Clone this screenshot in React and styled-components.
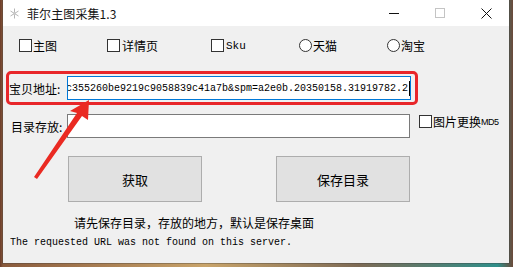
import React from 'react';
import styled, { createGlobalStyle } from 'styled-components';

const Global = createGlobalStyle`
    html, body {
        margin:0;
        padding:0;
    }
    body {
        width:513px;
        height:267px;
        overflow:hidden;
        background: linear-gradient(90deg, #6b3d2a 0px, #8a5a3c 3px, #c9a46a 40%, #7d6a55 70%, #2f8f8a 97%, #6b4a3a 100%);
        font-family: "Noto Sans CJK SC", "Noto Sans", sans-serif;
    }
`

const Page = styled.div`
    position:relative;
    width:513px;
    height:267px;
    padding-left:3px;
    box-sizing:border-box;
`

const Window = styled.div`
    width:506px;
    height:263px;
    background:#f0f0f0;
    display:flex;
    flex-direction:column;
    box-shadow: 0 0 0 1px rgba(60,60,60,0.35);
`

const TitleBar = styled.div`
    height:26px;
    background:#fff;
    display:flex;
    align-items:center;
    flex-shrink:0;
`

const AppIcon = styled.svg`
    width:9px;
    height:11px;
    margin-left:7px;
    margin-right:8px;
`

const Title = styled.div`
    font-size:12px;
    color:#111;
    flex:1;
    letter-spacing:0.1px;
`

const Ctrl = styled.div`
    width:46px;
    height:26px;
    display:flex;
    align-items:center;
    justify-content:center;
`

const Client = styled.div`
    flex:1;
    display:flex;
    flex-direction:column;
    font-size:12px;
    color:#000;
`

const OptionsRow = styled.div`
    display:grid;
    grid-template-columns: 88px 104px 88px 88px auto;
    padding:13px 0 0 16px;
    height:13px;
`

const Option = styled.label`
    display:flex;
    align-items:center;
    height:13px;
    font-size:${p => p.$latin ? '11px' : '12px'};
    font-family:${p => p.$latin ? '"Liberation Mono", monospace' : '"Noto Sans CJK SC", sans-serif'};
    white-space:nowrap;
`

const Box = styled.span`
    width:11px;
    height:11px;
    border:1px solid #333;
    background:#fff;
    margin-right:${p => p.$gap || 1}px;
    flex-shrink:0;
    border-radius:${p => p.$round ? '50%' : '0'};
`

const UrlFrame = styled.div`
    margin:19px 0 0 3px;
    width:412px;
    height:34px;
    box-sizing:border-box;
    border:3px solid #e8262a;
    border-radius:5px;
    display:flex;
    align-items:center;
`

const Label = styled.div`
    width:${p => p.$w}px;
    flex-shrink:0;
    white-space:nowrap;
    font-size:12px;
`

const TextField = styled.div`
    width:${p => p.$w}px;
    height:${p => p.$h}px;
    box-sizing:border-box;
    background:#fff;
    border:1px solid ${p => p.$focus ? '#0078d7' : '#7a7a7a'};
    display:flex;
    align-items:center;
    justify-content:flex-end;
    overflow:hidden;
    flex-shrink:0;
`

const FieldText = styled.span`
    font-family:"Liberation Mono", "DejaVu Sans Mono", monospace;
    font-size:10px;
    white-space:nowrap;
    color:#000;
    display:inline-block;
    transform:scaleY(1.15);
    padding-right:1px;
    border-right:1px solid #000;
    line-height:13px;
`

const DirRow = styled.div`
    margin:9px 0 0 8px;
    display:flex;
    align-items:center;
`

const Md5 = styled(Option)`
    margin-left:9px;
    align-self:flex-start;
    margin-top:1px;
    height:13px;
    small {
        font-family:"Liberation Sans Narrow", "Liberation Sans", sans-serif;
        font-size:9px;
        letter-spacing:-0.5px;
    }
`

const ButtonRow = styled.div`
    margin:18px 0 0 65px;
    display:flex;
    gap:74px;
`

const Button = styled.div`
    width:134px;
    height:46px;
    box-sizing:border-box;
    background:#e1e1e1;
    border:1px solid #adadad;
    display:flex;
    align-items:center;
    justify-content:center;
    font-size:13px;
`

const Hint = styled.div`
    margin:13px 0 0 71px;
    font-size:12px;
    line-height:16px;
`

const Status = styled.div`
    margin:6px 0 0 7px;
    font-family:"Liberation Mono", monospace;
    font-size:10px;
    line-height:12px;
    transform:scaleY(1.15);
    transform-origin:left center;
    white-space:nowrap;
`

const Arrow = styled.svg`
    position:absolute;
    left:0;
    top:0;
    width:513px;
    height:267px;
    pointer-events:none;
`

const App = () => (
    <>
        <Global />
        <Page>
            <Window>
                <TitleBar>
                    <AppIcon viewBox="0 0 9 11">
                        <g stroke="#b5b5b5" strokeWidth="1" fill="none">
                            <path d="M4.5 0.5v10M0.5 3l8 5M0.5 8l8-5" />
                        </g>
                        <circle cx="4.5" cy="5.5" r="1.5" fill="#c8c8c8" />
                    </AppIcon>
                    <Title>菲尔主图采集1.3</Title>
                    <Ctrl>
                        <svg width="10" height="10" viewBox="0 0 10 10">
                            <path d="M0 5.5h10" stroke="#111" strokeWidth="1" />
                        </svg>
                    </Ctrl>
                    <Ctrl>
                        <svg width="10" height="10" viewBox="0 0 10 10">
                            <rect x="0.5" y="0.5" width="9" height="9" fill="none" stroke="#c4c4c4" strokeWidth="1" />
                        </svg>
                    </Ctrl>
                    <Ctrl>
                        <svg width="11" height="11" viewBox="0 0 11 11">
                            <path d="M0.5 0.5l10 10M10.5 0.5l-10 10" stroke="#111" strokeWidth="1" />
                        </svg>
                    </Ctrl>
                </TitleBar>
                <Client>
                    <OptionsRow>
                        <Option><Box />主图</Option>
                        <Option><Box $gap={2} />详情页</Option>
                        <Option $latin><Box $gap={2} />Sku</Option>
                        <Option><Box $round />天猫</Option>
                        <Option><Box $round />淘宝</Option>
                    </OptionsRow>
                    <UrlFrame>
                        <Label $w={58}>宝贝地址:</Label>
                        <TextField $w={344} $h={24} $focus>
                            <FieldText>c355260be9219c9058839c41a7b&amp;spm=a2e0b.20350158.31919782.2</FieldText>
                        </TextField>
                    </UrlFrame>
                    <DirRow>
                        <Label $w={56}>目录存放:</Label>
                        <TextField $w={343} $h={24} />
                        <Md5><Box $gap={1} />图片更换<small>MD5</small></Md5>
                    </DirRow>
                    <ButtonRow>
                        <Button>获取</Button>
                        <Button>保存目录</Button>
                    </ButtonRow>
                    <Hint>请先保存目录，存放的地方，默认是保存桌面</Hint>
                    <Status>The requested URL was not found on this server.</Status>
                </Client>
            </Window>
            <Arrow viewBox="0 0 513 267">
                <path d="M89 100 L70 111 L77 113 L34 177 L37 179 L82 116 L88 120 Z" fill="#ea2a22" />
            </Arrow>
        </Page>
    </>
);

export default App;
